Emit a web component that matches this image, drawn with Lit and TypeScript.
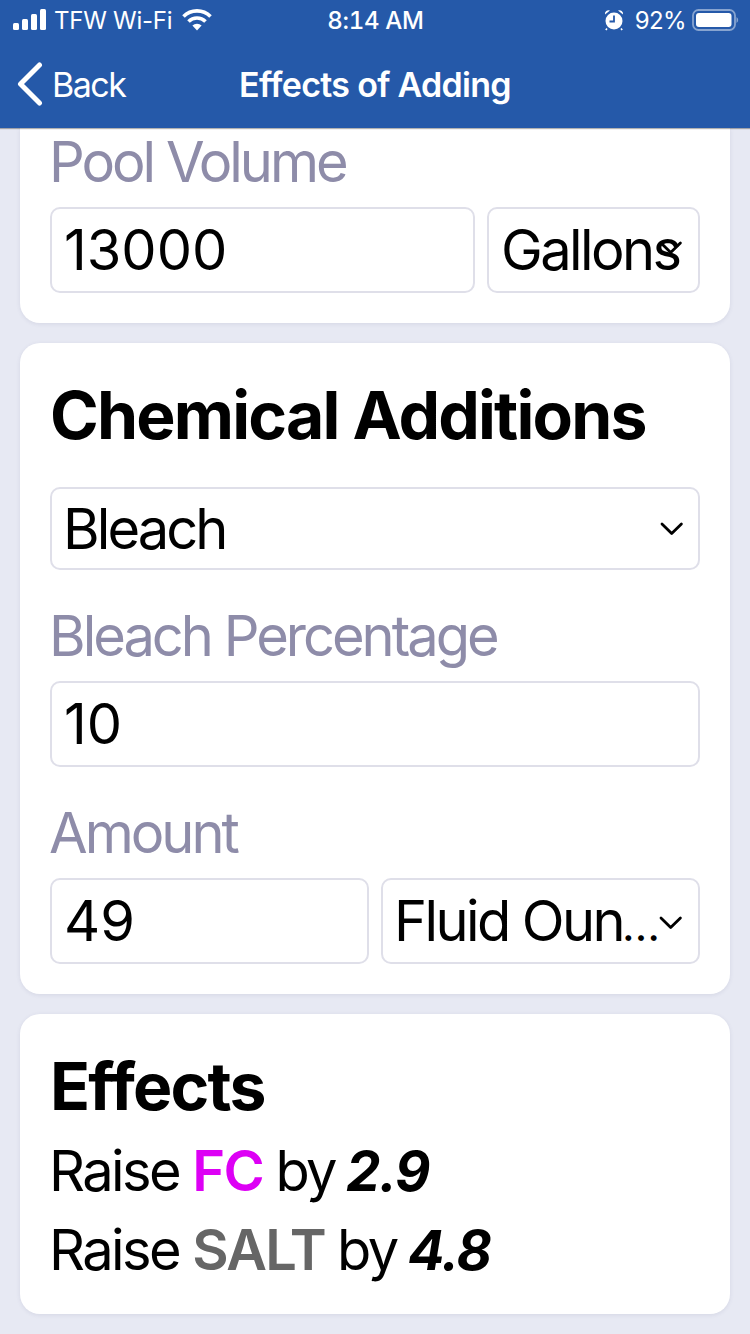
import { LitElement, html, css, svg } from "lit";
import { customElement } from "lit/decorators.js";

const chevron = svg`<path d="M2 2 L11.7 11.5 L21.4 2" fill="none" stroke="#000" stroke-width="2.8" stroke-linecap="round" stroke-linejoin="round"/>`;

@customElement("app-root")
export class AppRoot extends LitElement {
  static styles = css`
    :host {
      display: block;
      width: 750px;
      height: 1334px;
      overflow: hidden;
      background: #e7e9f3;
      font-family: Inter, "Liberation Sans", sans-serif;
      color: #000;
    }
    .header {
      height: 128px;
      background: #2559a9;
      color: #fff;
      box-shadow: 0 1px 1px rgba(0, 0, 0, 0.3);
      display: flex;
      flex-direction: column;
      position: relative;
    }
    .status {
      height: 40px;
      display: grid;
      grid-template-columns: 1fr auto 1fr;
      align-items: center;
      font-size: 24px;
      padding: 0 11px 0 12px;
    }
    .status-left, .status-right { display: flex; align-items: center; }
    .status-right { justify-content: flex-end; }
    .signal { margin-left: 1px; }
    .carrier { margin-left: 7px; letter-spacing: -0.25px; }
    .wifi { margin-left: 10px; }
    .time { font-weight: 500; letter-spacing: -0.3px; font-variant-numeric: tabular-nums; }
    .alarm { margin-right: 11px; }
    .pct { margin-right: 6px; letter-spacing: -0.6px; }
    .nav {
      flex: 1;
      display: grid;
      grid-template-columns: 1fr auto 1fr;
      align-items: center;
      padding: 0 17px;
    }
    .back { display: flex; align-items: center; gap: 9px; font-size: 34px; letter-spacing: -1.5px; }
    .title { font-size: 34px; font-weight: 600; letter-spacing: -0.7px; }
    .content {
      padding: 0 20px;
      display: flex;
      flex-direction: column;
      gap: 20px;
    }
    .card {
      background: #fff;
      border-radius: 20px;
      padding: 0 30px;
      box-shadow: 0 1px 4px rgba(60, 60, 110, 0.1);
    }
    .c1 { border-radius: 0 0 20px 20px; height: 195px; }
    .c2 { height: 651px; }
    .c3 { height: 300px; }
    .label {
      font-size: 56px;
      line-height: 60px;
      letter-spacing: -3px;
      margin-left: -1px;
      color: #8e8ca9;
    }
    .c1 .label { padding-top: 4px; height: 79px; box-sizing: border-box; }
    .gap { margin-top: 36px; margin-bottom: 15px; }
    .row { display: flex; gap: 12px; }
    .field {
      box-sizing: border-box;
      border: 2px solid #dfdfe9;
      border-radius: 10px;
      height: 86px;
      padding: 0 11px;
      font-size: 56px;
      letter-spacing: -2.9px;
      display: flex;
      align-items: center;
      position: relative;
      white-space: nowrap;
      overflow: hidden;
      flex: 1;
      min-width: 0;
    }
    .num { letter-spacing: 0; padding: 0 12px; }
    .full { flex: none; }
    .short { flex: none; height: 83px; }
    .w425 { flex: 0 0 425px; }
    .w319 { flex: 0 0 319px; }
    .sel svg { position: absolute; right: 14px; }
    .sel.gal { padding: 0 12px; letter-spacing: -2.6px; }
    .sel.gal svg { right: 15px; top: 32px; }
    .sel.short svg { top: 33px; }
    .sel.oz { letter-spacing: -2.6px; }
    .sel.oz svg { right: 15px; top: 36px; }
    .dots { font-size: 44px; letter-spacing: 0; margin-left: -1px; }
    .h2 {
      font-size: 66px;
      font-weight: 700;
      letter-spacing: -1.8px;
      line-height: 76px;
      padding-top: 34px;
      margin-bottom: 34px;
    }
    .h2.eff { padding-top: 34px; margin-bottom: 8px; }
    .line { font-size: 56px; line-height: 79px; letter-spacing: -2.6px; margin-left: -1px; }
    .fc { color: #dd00f5; font-weight: 600; letter-spacing: -1.5px; margin-right: -1px; }
    .salt { color: #666; font-weight: 600; letter-spacing: -1.8px; margin-right: -1px; }
    .val { font-weight: 700; font-style: italic; letter-spacing: -1.5px; font-size: 54.5px; margin-left: -2px; }
  `;

  render() {
    return html`
      <div class="header">
        <div class="status">
          <div class="status-left">
            <svg class="signal" width="34" height="22" viewBox="0 0 34 22" fill="#fff">
              <rect x="0" y="14" width="6" height="7" rx="1.5"/>
              <rect x="9" y="10" width="6" height="11" rx="1.5"/>
              <rect x="18" y="5" width="6" height="16" rx="1.5"/>
              <rect x="27" y="0" width="6" height="21" rx="1.5"/>
            </svg>
            <span class="carrier">TFW Wi-Fi</span>
            <svg class="wifi" width="30" height="22" viewBox="0 0 30 22" fill="none" stroke="#fff">
              <path d="M1.5 7.5 A19 19 0 0 1 28.5 7.5" stroke-width="3.6"/>
              <path d="M6.5 12.5 A12 12 0 0 1 23.5 12.5" stroke-width="3.6"/>
              <path d="M15 21.5 L10.4 16.6 A6.6 6.6 0 0 1 19.6 16.6 Z" fill="#fff" stroke="none"/>
            </svg>
          </div>
          <div class="time">8:14 AM</div>
          <div class="status-right">
            <svg class="alarm" width="20" height="22" viewBox="0 0 20 22">
              <circle cx="10" cy="12" r="8.5" fill="#fff"/>
              <path d="M1 5.5 A3.6 3.6 0 0 1 6 1.5 Z M19 5.5 A3.6 3.6 0 0 0 14 1.5 Z" fill="#fff"/>
              <path d="M3 19.5 L1.8 21 M17 19.5 L18.2 21" stroke="#fff" stroke-width="1.6"/>
              <path d="M10 6.5 V12.5 H5.5" fill="none" stroke="#2559a9" stroke-width="1.8"/>
            </svg>
            <span class="pct">92%</span>
            <svg width="47" height="24" viewBox="0 0 47 24">
              <rect x="1" y="2" width="42" height="20" rx="5.5" fill="none" stroke="#fff" stroke-opacity="0.45" stroke-width="1.8"/>
              <rect x="4" y="5" width="35.5" height="14" rx="3" fill="#fff"/>
              <path d="M44.5 9 A3.5 3.5 0 0 1 44.5 15 Z" fill="#fff" fill-opacity="0.45"/>
            </svg>
          </div>
        </div>
        <div class="nav">
          <div class="back">
            <svg width="26" height="44" viewBox="0 0 26 44" fill="none" stroke="#fff" stroke-width="5" stroke-linecap="round" stroke-linejoin="round"><path d="M22.5 3 L3.5 22 L22.5 41"/></svg>
            <span>Back</span>
          </div>
          <div class="title">Effects of Adding</div>
          <div></div>
        </div>
      </div>
      <div class="content">
        <div class="card c1">
          <div class="label">Pool Volume</div>
          <div class="row">
            <div class="field w425 num">13000</div>
            <div class="field sel gal">Gallons
              <svg width="24" height="14" viewBox="0 0 24 14">${chevron}</svg>
            </div>
          </div>
        </div>
        <div class="card c2">
          <div class="h2">Chemical Additions</div>
          <div class="field sel short">Bleach
            <svg width="24" height="14" viewBox="0 0 24 14">${chevron}</svg>
          </div>
          <div class="label gap">Bleach Percentage</div>
          <div class="field full num">10</div>
          <div class="label gap">Amount</div>
          <div class="row">
            <div class="field w319 num">49</div>
            <div class="field sel oz"><span>Fluid Oun<span class="dots">…</span></span>
              <svg width="24" height="14" viewBox="0 0 24 14">${chevron}</svg>
            </div>
          </div>
        </div>
        <div class="card c3">
          <div class="h2 eff">Effects</div>
          <div class="line">Raise <span class="fc">FC</span> by <span class="val">2.9</span></div>
          <div class="line">Raise <span class="salt">SALT</span> by <span class="val">4.8</span></div>
        </div>
      </div>
    `;
  }
}
